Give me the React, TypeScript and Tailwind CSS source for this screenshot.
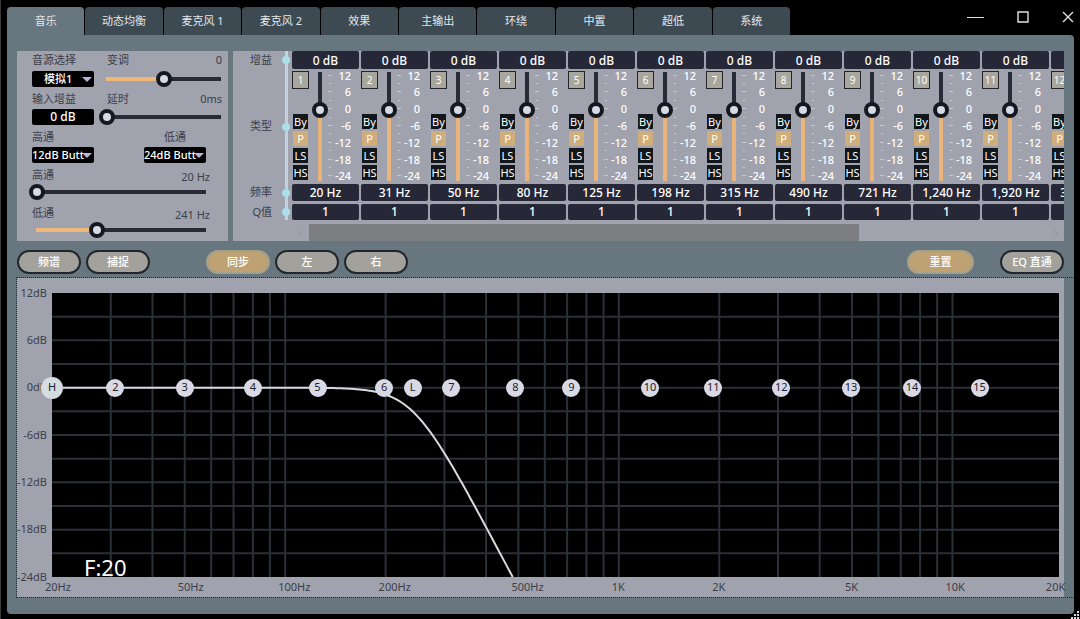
import React, { useRef, useState } from "react";
import clsx from "clsx";
import { ChevronLeft, ChevronRight } from "lucide-react";

interface Band {
  id: number;
  freq: number;
  gain: number;
  q: number;
  type: string;
}

const TABS = ["音乐", "动态均衡", "麦克风 1", "麦克风 2", "效果", "主输出", "环绕", "中置", "超低", "系统"];
const BAND_TYPES = ["By", "P", "LS", "HS"];
const BAND_FREQS = [20, 31, 50, 80, 125, 198, 315, 490, 721, 1240, 1920, 3070, 4970, 7570, 12060];
const DB_LABELS = [12, 6, 0, -6, -12, -18, -24];
const FREQ_LABELS = [
  { freq: 20, text: "20Hz" },
  { freq: 50, text: "50Hz" },
  { freq: 100, text: "100Hz" },
  { freq: 200, text: "200Hz" },
  { freq: 500, text: "500Hz" },
  { freq: 1000, text: "1K" },
  { freq: 2000, text: "2K" },
  { freq: 5000, text: "5K" },
  { freq: 10000, text: "10K" },
  { freq: 20000, text: "20K" },
];

const DB_MAX = 12;
const DB_MIN = -24;
// Share of the plot width taken by one decade
const DECADE = 33.13;
const BAND_STEP = 69;

const freqToX = (freq: number) => Math.log10(freq / 20) * DECADE;
const dbToY = (db: number) => ((DB_MAX - db) / (DB_MAX - DB_MIN)) * 100;

const gridFreqs = [1, 10, 100, 1000]
  .flatMap((decade) => [10, 20, 30, 40, 50, 60, 70, 80, 90].map((n) => n * decade))
  .filter((f) => f > 20 && f <= 10000);

// 24dB/oct Butterworth low pass
const buildCurve = (cutoff: number) => {
  const points: string[] = [];
  for (let x = 0; x <= 100; x += 0.25) {
    const freq = 20 * Math.pow(10, x / DECADE);
    const db = -10 * Math.log10(1 + Math.pow(freq / cutoff, 8));
    points.push(`${x.toFixed(2)},${dbToY(db).toFixed(2)}`);
    if (db < DB_MIN) break;
  }
  return `M${points.join("L")}`;
};

const thumb =
  "[&::-webkit-slider-thumb]:appearance-none [&::-webkit-slider-thumb]:size-4 [&::-webkit-slider-thumb]:rounded-full [&::-webkit-slider-thumb]:border-4 [&::-webkit-slider-thumb]:border-solid [&::-webkit-slider-thumb]:border-[#14191f] [&::-webkit-slider-thumb]:bg-[#d6d9e6]";

interface SliderProps {
  id: string;
  min: number;
  max: number;
  value: number;
  className?: string;
  onChange: (value: number) => void;
}

const Slider: React.FC<SliderProps> = ({ id, min, max, value, className, onChange }) => {
  const pct = ((value - min) / (max - min)) * 100;
  return (
    <input
      id={id}
      type="range"
      min={min}
      max={max}
      value={value}
      onChange={(e) => onChange(Number(e.target.value))}
      className={clsx("block h-4 appearance-none bg-[length:calc(100%-14px)_4px] bg-center bg-no-repeat", thumb, className)}
      style={{ backgroundImage: `linear-gradient(to right, #f0b878 ${pct}%, #272b38 ${pct}%)` }}
    />
  );
};

const Select: React.FC<{ id: string; options: string[]; className?: string }> = ({ id, options, className }) => (
  <div className="relative w-[62px]">
    <select
      id={id}
      className={clsx("block h-4 w-full appearance-none overflow-hidden rounded-xs bg-black text-[11px] leading-4 font-medium text-white", className)}
    >
      {options.map((o) => (
        <option key={o}>{o}</option>
      ))}
    </select>
    <svg className="pointer-events-none absolute top-1.5 right-0.5 h-[5px] w-[10px]" viewBox="0 0 10 5">
      <path d="M0 0h10L5 5z" fill="#b9b3dc" />
    </svg>
  </div>
);

const SourcePanel: React.FC<{ lowPass: number; onLowPass: (v: number) => void }> = ({ lowPass, onLowPass }) => {
  const [pitch, setPitch] = useState(0);
  const [delay, setDelay] = useState(0);
  const [highPass, setHighPass] = useState(20);

  return (
    <section className="w-[211px] shrink-0 bg-[#a0a2ae] pt-px pl-[15px] text-[#3c3f4a]">
      <div className="flex gap-[5px]">
        <div className="w-[62px]">
          <label htmlFor="source" className="block h-[19px] leading-4">音源选择</label>
          <Select id="source" options={["模拟1", "模拟2"]} className="pl-3" />
        </div>
        <div className="flex-1">
          <div className="flex h-[19px] justify-between pr-1.5 pl-2 leading-4">
            <label htmlFor="pitch">变调</label>
            <span>{pitch}</span>
          </div>
          <Slider id="pitch" min={-12} max={12} value={pitch} onChange={setPitch} className="w-full" />
        </div>
      </div>

      <div className="mt-1 flex gap-[5px]">
        <div className="w-[62px]">
          <label htmlFor="input-gain" className="block h-[18px] leading-4">输入增益</label>
          <input
            id="input-gain"
            defaultValue="0 dB"
            className="block h-4 w-full rounded-xs bg-black text-center text-xs font-medium text-white"
          />
        </div>
        <div className="flex-1">
          <div className="flex h-[18px] justify-between pr-1.5 pl-2 leading-4">
            <label htmlFor="delay">延时</label>
            <span>{delay}ms</span>
          </div>
          <Slider id="delay" min={0} max={100} value={delay} onChange={setDelay} className="w-full" />
        </div>
      </div>

      <div className="mt-1 flex gap-[50px]">
        <div>
          <label htmlFor="hp-type" className="block h-[18px] leading-4">高通</label>
          <Select id="hp-type" options={["12dB Butt", "24dB Butt"]} />
        </div>
        <div>
          <label htmlFor="lp-type" className="block h-[18px] pl-5 leading-4">低通</label>
          <Select id="lp-type" options={["24dB Butt", "12dB Butt"]} />
        </div>
      </div>

      <div className="mt-1 flex h-[17px] items-start justify-between pr-[18px] leading-4">
        <label htmlFor="high-pass">高通</label>
        <span className="pt-0.5">{highPass} Hz</span>
      </div>
      <Slider id="high-pass" min={20} max={640} value={highPass} onChange={setHighPass} className="-ml-[3px] w-[184px]" />

      <div className="mt-[5px] flex h-[17px] items-start justify-between pr-[18px] leading-4">
        <label htmlFor="low-pass">低通</label>
        <span className="pt-0.5">{lowPass} Hz</span>
      </div>
      <Slider id="low-pass" min={20} max={640} value={lowPass} onChange={onLowPass} className="-ml-[3px] w-[184px]" />
    </section>
  );
};

const valueBox = "block w-full rounded-xs bg-[#272837] text-center text-xs font-medium text-white";

const BandStrip: React.FC<{ band: Band; onChange: (band: Band) => void }> = ({ band, onChange }) => {
  const pct = ((band.gain - DB_MIN) / (DB_MAX - DB_MIN)) * 100;
  return (
    <div className="w-[67px] shrink-0">
      <input aria-label={`增益 ${band.id}`} readOnly value={`${band.gain} dB`} className={clsx(valueBox, "h-[18px]")} />
      <div className="flex h-[115px]">
        <div className="flex w-[17px] flex-col items-center pt-0.5">
          <button className="h-[18px] w-full border border-[#23252b] bg-[#a9a79d] text-[10px] leading-4 text-white">{band.id}</button>
          <div className="mt-[25px] flex flex-col gap-0.5">
            {BAND_TYPES.map((t) => (
              <button
                key={t}
                onClick={() => onChange({ ...band, type: t })}
                className={clsx(
                  "h-[15px] w-[15px] text-[11px] leading-[15px] text-white",
                  t === band.type ? "bg-[#cfae7c]" : "bg-[#12171c]"
                )}
              >
                {t}
              </button>
            ))}
          </div>
        </div>
        <input
          type="range"
          aria-label={`推子 ${band.id}`}
          min={DB_MIN}
          max={DB_MAX}
          value={band.gain}
          onChange={(e) => onChange({ ...band, gain: Number(e.target.value) })}
          className={clsx(
            "ml-[3px] block h-full w-4 appearance-none bg-[length:4px_calc(100%-6px)] bg-center bg-no-repeat [direction:rtl] [writing-mode:vertical-lr]",
            thumb
          )}
          style={{ backgroundImage: `linear-gradient(to top, #e8b47c ${pct}%, #272b38 ${pct}%)` }}
        />
        <div className="flex w-[23px] flex-col justify-between pt-1.5 pb-2 text-[11px] font-medium text-white">
          {DB_LABELS.flatMap((db) => [db, db - 3]).slice(0, -1).map((db) => (
            <div key={db} className="flex h-0 items-center justify-between">
              <span className={clsx("h-px shrink-0 bg-[#c6c9d4]", db % 6 === 0 ? "w-1" : "ml-px w-0.5")} />
              {db % 6 === 0 && <span className="leading-none">{db}</span>}
            </div>
          ))}
        </div>
      </div>
      <input aria-label={`频率 ${band.id}`} readOnly value={`${band.freq.toLocaleString("en-US")} Hz`} className={clsx(valueBox, "h-[17px]")} />
      <input aria-label={`Q值 ${band.id}`} readOnly value={band.q} className={clsx(valueBox, "mt-[3px] h-4")} />
    </div>
  );
};

const RowLabel: React.FC<{ text: string; className: string }> = ({ text, className }) => (
  <div className={clsx("-mr-[5px] flex items-center justify-end gap-[10px]", className)}>
    <span>{text}</span>
    <span className="size-2 rounded-full bg-[#abdfea]" />
  </div>
);

const EqPanel: React.FC<{ bands: Band[]; onChange: (band: Band) => void }> = ({ bands, onChange }) => {
  const stripsRef = useRef<HTMLDivElement>(null);
  const [offset, setOffset] = useState(0);

  const scrollStrips = (delta: number) => {
    stripsRef.current?.scrollBy({ left: delta });
  };

  const handleScroll = (e: React.UIEvent<HTMLDivElement>) => {
    const el = e.currentTarget;
    setOffset((el.scrollLeft / el.scrollWidth) * 100);
  };

  return (
    <section className="flex min-w-0 flex-1 gap-1 bg-[#a0a2ae]">
      <div className="mb-[21px] w-[55px] shrink-0 border-r-[3px] border-[#c3d0de] text-[#3c3f4a]">
        <RowLabel text="增益" className="h-[18px]" />
        <RowLabel text="类型" className="h-[115px]" />
        <RowLabel text="频率" className="h-[17px]" />
        <RowLabel text="Q值" className="mt-[3px] h-4" />
      </div>
      <div className="flex min-w-0 flex-1 flex-col">
        <div ref={stripsRef} onScroll={handleScroll} className="flex gap-0.5 overflow-x-auto overflow-y-hidden [scrollbar-width:none]">
          {bands.map((b) => (
            <BandStrip key={b.id} band={b} onChange={onChange} />
          ))}
        </div>
        <div className="mt-1 flex h-[17px]">
          <button aria-label="向左" onClick={() => scrollStrips(-BAND_STEP)} className="flex w-[17px] items-center justify-center text-[#8a8d99]">
            <ChevronLeft size={10} />
          </button>
          <div className="flex-1">
            <div className="h-full w-[74.5%] bg-[#7e7f83]" style={{ marginLeft: `${offset}%` }} />
          </div>
          <button aria-label="向右" onClick={() => scrollStrips(BAND_STEP)} className="flex w-[17px] items-center justify-center text-[#8a8d99]">
            <ChevronRight size={10} />
          </button>
        </div>
      </div>
    </section>
  );
};

const PillButton: React.FC<{ text: string; active?: boolean; className?: string }> = ({ text, active, className }) => (
  <button
    className={clsx(
      "h-6 rounded-full border-2 font-medium text-white",
      active ? "border-[#a5a08c] bg-[#bfa274]" : "border-[#20262b] bg-[#a3a19b]",
      className ?? "w-16"
    )}
  >
    {text}
  </button>
);

const Graph: React.FC<{ bands: Band[]; lowPass: number }> = ({ bands, lowPass }) => {
  const nodes = [
    ...bands.slice(1).map((b) => ({ label: String(b.id), freq: b.freq })),
    { label: "L", freq: lowPass },
    { label: "H", freq: 20 },
  ];

  return (
    <section className="mt-[3px] -mr-[10px] -ml-px flex flex-1 border border-r-0 border-dotted border-[#22282d] text-[#3c3f4a]">
      <div className="mr-[10px] flex flex-1 flex-col bg-[#a0a2ae] pt-[15px] pr-[5px]">
        <div className="flex min-h-[284px] flex-1">
          <div className="flex w-[35px] shrink-0 flex-col justify-between pr-[5px]">
            {DB_LABELS.map((db) => (
              <div key={db} className="flex h-0 items-center justify-end">
                {db}dB
              </div>
            ))}
          </div>
          <div className="relative flex-1 bg-black">
            <svg className="absolute inset-0 size-full">
              <g stroke="#2b2f38" strokeWidth="2">
                {gridFreqs.map((f) => (
                  <line key={f} x1={`${freqToX(f)}%`} x2={`${freqToX(f)}%`} y1="0" y2="100%" />
                ))}
                {[9, 6, 3, 0, -3, -6, -9, -12, -15, -18, -21].map((db) => (
                  <line key={db} x1="0" x2="100%" y1={`${dbToY(db)}%`} y2={`${dbToY(db)}%`} />
                ))}
              </g>
              <svg width="100%" height="100%" viewBox="0 0 100 100" preserveAspectRatio="none">
                <path d={buildCurve(lowPass)} fill="none" stroke="#d9dade" strokeWidth="2" vectorEffect="non-scaling-stroke" />
              </svg>
            </svg>
            {nodes.map((n) => (
              <button
                key={n.label}
                className={clsx(
                  "absolute -translate-x-1/2 -translate-y-1/2 rounded-full text-center text-[#20232b]",
                  n.label === "H" ? "size-[22px] bg-[#d3dde2]" : "size-[18px] bg-[#d9d9e6]"
                )}
                style={{ left: `${freqToX(n.freq)}%`, top: `${dbToY(0)}%` }}
              >
                {n.label}
              </button>
            ))}
            <span className="absolute bottom-0 left-8 text-[22px] leading-5 text-white">F:20</span>
          </div>
        </div>
        <div className="relative ml-[35px] h-5">
          {FREQ_LABELS.map((l) => (
            <span key={l.freq} className="absolute top-0.5 -ml-[7px] leading-4" style={{ left: `${freqToX(l.freq)}%` }}>
              {l.text}
            </span>
          ))}
        </div>
      </div>
    </section>
  );
};

const App: React.FC = () => {
  const [tab, setTab] = useState(TABS[0]);
  const [lowPass, setLowPass] = useState(241);
  const [bands, setBands] = useState<Band[]>(
    BAND_FREQS.map((freq, i) => ({ id: i + 1, freq, gain: 0, q: 1, type: "P" }))
  );

  const updateBand = (band: Band) => {
    setBands((prev) => prev.map((b) => (b.id === band.id ? band : b)));
  };

  return (
    <div className="relative flex min-h-screen flex-col overflow-hidden border-l border-[#3a3c3f] bg-black pt-[7px] pr-1.5 pb-1.5 pl-1.5 font-['Noto_Sans','Noto_Sans_CJK_SC',sans-serif] text-[11px]">
      <header className="flex h-7 items-stretch justify-between">
        <nav className="grid w-[783px] grid-cols-10 gap-px">
          {TABS.map((t) => (
            <button
              key={t}
              onClick={() => setTab(t)}
              className={clsx("rounded-t-sm text-[#e4e7ea]", t === tab ? "bg-[#68777f]" : "bg-[#3e4a52]")}
            >
              {t}
            </button>
          ))}
        </nav>
        <div className="flex h-5 items-center gap-[33px] text-[#e2e2e2]">
          <button aria-label="最小化">
            <svg width="17" height="12" viewBox="0 0 17 12">
              <path d="M0 6.5h17" stroke="currentColor" />
            </svg>
          </button>
          <button aria-label="最大化">
            <svg width="12" height="12" viewBox="0 0 12 12">
              <path d="M1 1h10v10H1z" fill="none" stroke="currentColor" strokeWidth="1.4" />
            </svg>
          </button>
          <button aria-label="关闭">
            <svg width="12" height="12" viewBox="0 0 12 12">
              <path d="M1 1l10 10M11 1L1 11" stroke="currentColor" strokeWidth="1.4" />
            </svg>
          </button>
        </div>
      </header>

      <main className="flex flex-1 flex-col rounded-b-sm rounded-tr-sm bg-[#68777f] px-[10px] pt-4 pb-4">
        <div className="flex h-[190px] gap-[5px]">
          <SourcePanel lowPass={lowPass} onLowPass={setLowPass} />
          <EqPanel bands={bands} onChange={updateBand} />
        </div>

        <div className="mt-[9px] flex">
          <div className="flex gap-[5px]">
            <PillButton text="频谱" />
            <PillButton text="捕捉" />
          </div>
          <div className="ml-14 flex gap-[5px]">
            <PillButton text="同步" active />
            <PillButton text="左" />
            <PillButton text="右" />
          </div>
          <div className="ml-auto flex gap-[26px]">
            <PillButton text="重置" active className="w-[67px]" />
            <PillButton text="EQ 直通" />
          </div>
        </div>

        <Graph bands={bands} lowPass={lowPass} />
      </main>

      <svg className="absolute right-0 bottom-0 size-[10px]" viewBox="0 0 10 10" fill="#d8dadd">
        <path d="M7 1h2v2H7zM4 4h2v2H4zM7 4h2v2H7zM1 7h2v2H1zM4 7h2v2H4zM7 7h2v2H7z" />
      </svg>
    </div>
  );
};

export default App;
